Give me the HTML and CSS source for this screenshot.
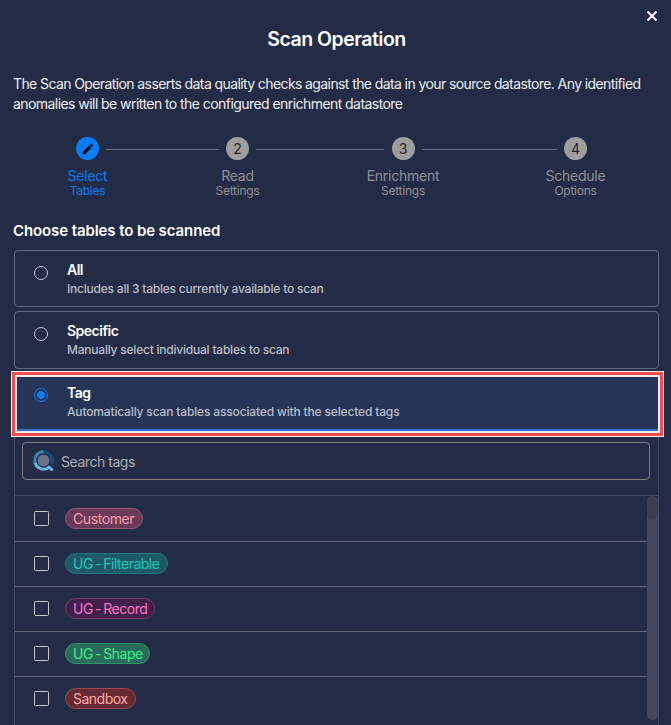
FILE: index.html
```html
<!DOCTYPE html>
<html lang="en">
<head>
<meta charset="utf-8">
<title>Scan Operation</title>
<link rel="stylesheet" href="styles.css">
</head>
<body>
<main class="dialog">
  <button class="close" aria-label="Close"><svg width="12" height="12" viewBox="0 0 12 12"><path d="M1.5 1.5l9 9M10.500 1.500l-9 9"/></svg></button>
  <h1 class="title">Scan Operation</h1>
  <p class="intro"><span class="intro-first">The Scan Operation asserts data quality checks against the data in your source datastore. Any identified</span><br><span class="intro-second">anomalies will be written to the configured enrichment datastore</span></p>

  <div class="stepper">
    <div class="step active"><span class="dot"><svg width="14" height="14" viewBox="0 0 24 24"><path d="M20.710 7.040c.39-.39.39-1.040 0-1.410l-2.340-2.340c-.37-.39-1.020-.39-1.410 0l-1.840 1.830 3.750 3.750M3 17.250V21h3.750L17.810 9.930l-3.750-3.750L3 17.250z"/></svg></span><span class="name">Select</span><span class="sub">Tables</span></div>
    <div class="step"><span class="dot">2</span><span class="name">Read</span><span class="sub">Settings</span></div>
    <div class="step"><span class="dot">3</span><span class="name">Enrichment</span><span class="sub">Settings</span></div>
    <div class="step"><span class="dot">4</span><span class="name">Schedule</span><span class="sub">Options</span></div>
  </div>

  <h2 class="heading">Choose tables to be scanned</h2>

  <div class="options">
    <label class="option"><span class="radio"></span><span class="option-text"><b>All</b><small class="desc-all">Includes all 3 tables currently available to scan</small></span></label>
    <label class="option specific"><span class="radio"></span><span class="option-text"><b>Specific</b><small class="desc-specific">Manually select individual tables to scan</small></span></label>
    <label class="option selected"><span class="radio"></span><span class="option-text"><b>Tag</b><small class="desc-tag">Automatically scan tables associated with the selected tags</small></span></label>
  </div>

  <section class="panel">
    <div class="search">
      <svg width="22" height="22" viewBox="0 0 22 22">
        <circle class="lens" cx="10.500" cy="10.500" r="5.900"/>
        <path class="ring-dark" d="M10.500 1.700A8.800 8.800 0 0 1 18.500 14"/>
        <path class="ring-mid" d="M2.300 13.500A8.800 8.800 0 0 1 10.500 1.700"/>
        <path class="ring-light" d="M2.100 13A8.800 8.800 0 0 0 15.300 17.700M14.500 16.500l2.200 1.200 3 2.700"/>
      </svg>
      <span>Search tags</span>
    </div>
    <div class="list">
      <div class="rows">
        <div class="row"><span class="check"></span><span class="chip customer">Customer</span></div>
        <div class="row"><span class="check"></span><span class="chip filterable">UG - Filterable</span></div>
        <div class="row"><span class="check"></span><span class="chip record">UG - Record</span></div>
        <div class="row"><span class="check"></span><span class="chip shape">UG - Shape</span></div>
        <div class="row"><span class="check"></span><span class="chip sandbox">Sandbox</span></div>
      </div>
      <div class="track"><div class="thumb"></div></div>
    </div>
  </section>
</main>
</body>
</html>
```
FILE: styles.css
```css
* { box-sizing: border-box; }
body { margin: 0; background: #232c47; color: #fff; font-family: Inter, "Liberation Sans", sans-serif; overflow: hidden; }
.dialog { position: relative; height: 725px; padding: 27px 12px 0 14px; overflow: hidden; }
.close { position: absolute; top: 10px; right: 13px; width: 12px; height: 12px; padding: 0; border: 0; background: none; display: block; }
.close svg { display: block; fill: none; stroke: #fff; stroke-width: 1.8; }
.title { margin: 0 0 23px; height: 24px; line-height: 24px; font-size: 19.500px; font-weight: 600; text-align: center; letter-spacing: -0.5px; }
.intro { margin: 0 0 0 -1px; line-height: 20px; font-size: 14px; color: #eceef2; white-space: nowrap; }
.intro-first { letter-spacing: -0.6px; }
.intro-second { letter-spacing: -0.560px; }

.stepper { display: grid; grid-template-columns: 147px 153px 178px 167px; margin-top: 23px; height: 84px; }
.step { position: relative; display: flex; flex-direction: column; align-items: center; color: #8d9097; }
.dot { display: flex; align-items: center; justify-content: center; width: 23px; height: 23px; border-radius: 50%; background: #9e9e9e; color: #25272c; font-size: 14px; }
.dot svg { fill: #050a16; }
.name { margin-top: 7px; height: 17px; line-height: 18px; font-size: 14px; letter-spacing: -0.25px; }
.sub { height: 14px; line-height: 14px; font-size: 12px; letter-spacing: -0.25px; }
.active { color: #087cf5; }
.active .dot { background: #087cf5; }
.step::after { content: ""; position: absolute; top: 12px; left: 92px; height: 1px; width: 113px; background: #626b83; }
.step:nth-child(2)::after { left: 95px; width: 128px; }
.step:nth-child(3)::after { left: 108px; width: 135px; }
.step:last-child::after { display: none; }

.heading { margin: 0 0 9px -1px; height: 20px; line-height: 20px; font-size: 15px; font-weight: 600; letter-spacing: -0.1px; }
.options { display: flex; flex-direction: column; gap: 4px; }
.option { position: relative; display: flex; height: 57px; border: 1px solid #626b82; border-radius: 4px; padding: 11px 19px 0; }
.option.specific { height: 58px; }
.option.selected { height: 58px; background: #263557; border-color: #263557; border-bottom: 2px solid #2f6fd4; border-radius: 0; }
.selected::before { content: ""; position: absolute; inset: -3px -6px -8px -4px; border: 1px solid #f8eeee; box-shadow: inset 0 0 0 3px #ee4e4e, inset 0 0 0 5px #f6eaea; }
.radio { width: 14px; height: 14px; margin-top: 4px; border: 1.500px solid #c0c4cd; border-radius: 50%; }
.selected .radio { margin-top: 3px; border-color: #087cf5; background: radial-gradient(circle, #087cf5 0 3.700px, transparent 4.200px); }
.option-text { display: flex; flex-direction: column; margin-left: 19px; }
.option-text b { height: 17px; line-height: 15px; font-size: 14px; font-weight: 600; letter-spacing: -0.5px; }
.option-text small { height: 18px; line-height: 20px; font-size: 12px; font-weight: 500; color: #b8bcc7; white-space: nowrap; letter-spacing: -0.22px; }
.option-text .desc-tag { letter-spacing: -0.160px; }

.panel { height: 300px; width: 645px; border: 1px solid #424b63; border-top: 0; padding-top: 11px; }
.search { display: flex; align-items: center; gap: 6px; width: 628px; height: 38px; margin-left: 7px; padding-left: 10px; border: 1px solid #7e7e80; border-radius: 4px; color: #a9adb7; font-size: 14px; letter-spacing: -0.45px; }
.search svg { fill: none; stroke-width: 3; }
.search .lens { fill: #68738c; }
.ring-dark { stroke: #154f7c; }
.ring-mid { stroke: #3d82b3; }
.ring-light { stroke: #6bb2e8; }
.list { display: flex; margin-top: 15px; border-top: 1px solid #424b63; }
.rows { flex: 1; }
.row { display: flex; align-items: center; height: 45px; padding: 0 0 1px 19px; border-bottom: 1px solid #626877; }
.row:first-child { height: 46px; }
.row:last-child { border-color: transparent; }
.check { width: 15px; height: 15px; border: 1.500px solid #c3c6cd; border-radius: 1.500px; }
.chip { height: 21px; margin-left: 16px; padding: 0 7px; border: 1px solid; border-radius: 11px; line-height: 19px; font-size: 14px; letter-spacing: -0.5px; word-spacing: -1.200px; white-space: nowrap; }
.customer { width: 78px; color: #ff9caf; background: #6a3a58; border-color: #99587a; letter-spacing: -0.4px; }
.filterable { width: 103px; color: #17cbbb; background: #205966; border-color: #1d7b80; }
.record { width: 90px; color: #ff73c8; background: #431f4c; border-color: #793874; }
.shape { width: 85px; color: #36f483; background: #2a6b5c; border-color: #30946c; }
.sandbox { width: 71px; color: #ffaaa5; background: #672932; border-color: #984b50; }
.track { width: 11px; height: 224px; border-radius: 6px; background: #42485f; }
.thumb { width: 11px; height: 23px; border-radius: 6px; background: #393f53; }
```
